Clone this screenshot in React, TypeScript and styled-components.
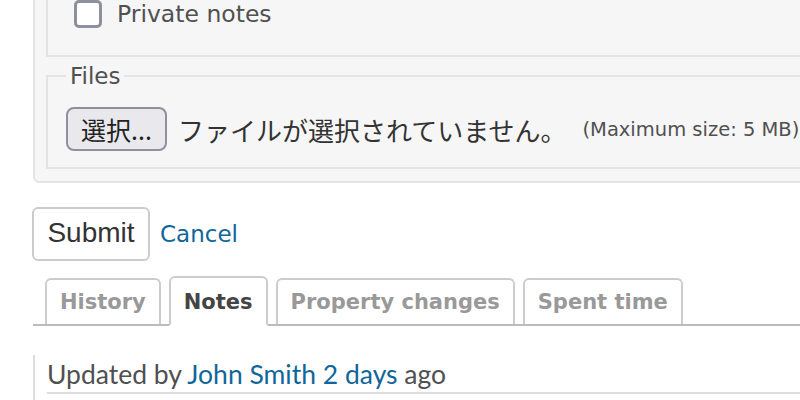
import styled, { createGlobalStyle } from "styled-components";

const GlobalStyle = createGlobalStyle`
  html, body {
    margin: 0;
    padding: 0;
    overflow: hidden;
    background: #fff;
  }
  body {
    font-family: "DejaVu Sans", Verdana, sans-serif;
    font-size: 23px;
    color: #505050;
  }
`;

const tabs = [
  { label: "History", selected: false },
  { label: "Notes", selected: true },
  { label: "Property changes", selected: false },
  { label: "Spent time", selected: false },
];

const App = () => {
  return (
    <>
      <GlobalStyle />
      <Page>
        <Box>
          <Fieldset>
            <CheckRow>
              <Check type="checkbox" />
              <span>Private notes</span>
            </CheckRow>
          </Fieldset>
          <FilesFieldset>
            <Legend>Files</Legend>
            <FileRow>
              <FileButton type="button">選択...</FileButton>
              <FileStatus>ファイルが選択されていません。</FileStatus>
              <Info>(Maximum size: 5 MB)</Info>
            </FileRow>
          </FilesFieldset>
        </Box>

        <Actions>
          <SubmitButton type="button">Submit</SubmitButton>
          <TextLink href="#">Cancel</TextLink>
        </Actions>

        <TabBar>
          {tabs.map((t) => (
            <Tab key={t.label} selected={t.selected}>
              {t.label}
            </Tab>
          ))}
        </TabBar>

        <Journal>
          <JournalHeader>
            Updated by <TextLink href="#">John Smith</TextLink>{" "}
            <TextLink href="#">2 days</TextLink> ago
          </JournalHeader>
        </Journal>
      </Page>
    </>
  );
};

export default App;

const Page = styled.div`
  width: 1000px;
  padding-left: 33px;
`;

const Box = styled.div`
  margin-top: -36px;
  background: #f6f6f6;
  border: 2px solid #e4e4e4;
  border-radius: 6px;
  padding: 12px 11px 12px 11px;
`;

const Fieldset = styled.fieldset`
  margin: 0;
  border: 2px solid #e4e4e4;
  padding: 19px 18px 26px 18px;
  min-width: 0;
`;

const FilesFieldset = styled(Fieldset)`
  margin-top: 5px;
  padding: 18px 18px 16px 18px;
`;

const Legend = styled.legend`
  padding: 0 4px;
  line-height: 27px;
  font-size: 23px;
  color: #505050;
  position: relative;
  top: 1px;
`;

const CheckRow = styled.label`
  display: flex;
  align-items: center;
  height: 30px;
  padding-left: 8px;
  gap: 15px;
  font-size: 23.5px;
`;

const Check = styled.input`
  appearance: none;
  margin: 0;
  width: 28px;
  height: 28px;
  box-sizing: border-box;
  border: 3px solid #8f8f9d;
  border-radius: 5px;
  background: #fff;
`;

const FileRow = styled.div`
  display: flex;
  align-items: center;
  white-space: nowrap;
`;

const FileButton = styled.button`
  box-sizing: border-box;
  height: 44px;
  width: 101px;
  margin: 0;
  padding: 0 10px;
  background: #e9e9ed;
  border: 2px solid #8f8f9d;
  border-radius: 8px;
  font-family: "Noto Sans CJK JP", sans-serif;
  font-size: 25px;
  color: #222;
`;

const FileStatus = styled.span`
  margin-left: 11px;
  font-family: "Noto Sans CJK JP", sans-serif;
  font-size: 26px;
  color: #333;
`;

const Info = styled.span`
  margin-left: 16px;
  font-size: 19.5px;
  color: #505050;
`;

const Actions = styled.div`
  display: flex;
  align-items: baseline;
  gap: 10px;
  margin-top: 24px;
  margin-left: -1px;
`;

const SubmitButton = styled.button`
  box-sizing: border-box;
  width: 118px;
  height: 54px;
  margin: 0;
  padding: 0 0 2px 0;
  background: #fff;
  border: 2px solid #ccc;
  border-radius: 6px;
  font-family: "Liberation Sans", Arial, sans-serif;
  font-size: 28px;
  color: #333;
`;

const TextLink = styled.a`
  color: #116699;
  text-decoration: none;
`;

const TabBar = styled.div`
  display: flex;
  align-items: flex-end;
  gap: 8px;
  margin-top: 16px;
  padding-left: 12px;
  border-bottom: 2px solid #bbb;
  height: 47px;
`;

const Tab = styled.div<{ selected: boolean }>`
  box-sizing: border-box;
  height: ${({ selected }) => (selected ? "50px" : "46px")};
  margin-bottom: ${({ selected }) => (selected ? "-2px" : "0")};
  padding: ${({ selected }) => (selected ? "2px" : "0")} 13px 0 13px;
  display: flex;
  align-items: center;
  background: #fff;
  border: 2px solid #ccc;
  border-bottom: ${({ selected }) => (selected ? "2px solid #fff" : "none")};
  border-radius: 6px 6px 0 0;
  font-weight: bold;
  font-size: 21px;
  color: ${({ selected }) => (selected ? "#444" : "#999")};
  white-space: nowrap;
`;

const Journal = styled.div`
  margin-top: 29px;
  border-left: 2px solid #ddd;
  padding-left: 12px;
  height: 60px;
`;

const JournalHeader = styled.h4`
  margin: 0;
  padding-top: 4px;
  padding-bottom: 2px;
  border-bottom: 2px solid #ddd;
  font-family: "Lato", "Trebuchet MS", sans-serif;
  font-weight: normal;
  font-size: 26.5px;
  line-height: 31px;
  color: #505050;
`;
